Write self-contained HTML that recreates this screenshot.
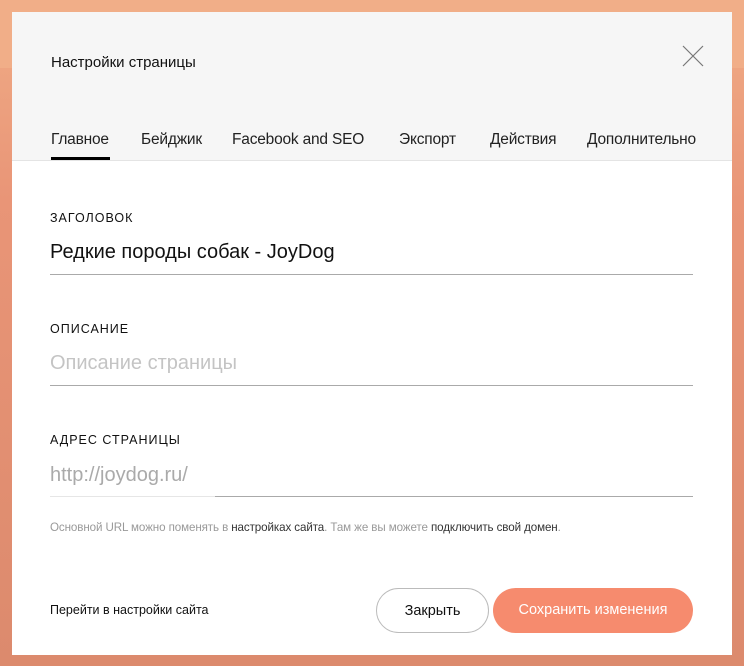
<!DOCTYPE html>
<html><head><meta charset="utf-8"><style>
*{margin:0;padding:0;box-sizing:border-box}
body{width:744px;height:666px;overflow:hidden;background:linear-gradient(180deg,#f0ac86 0%,#e99577 30%,#dc8a6d 100%);font-family:"Liberation Sans","Noto Sans CJK SC",sans-serif;position:relative}
.band{position:absolute;left:0;top:0;width:744px;height:68px;background:#f1ae88}
.modal{position:absolute;left:12px;top:12px;width:720px;height:643px;background:#fff}
.head{position:absolute;left:0;top:0;width:720px;height:149px;background:#f6f6f6;border-bottom:1px solid #e4e4e4}
.t{position:absolute;color:#111}
.title{left:39px;top:42px;font-size:15px}
.x{position:absolute;left:670px;top:33px}
.tab{position:absolute;top:119px;font-size:15.5px;color:#222;letter-spacing:-0.2px}
.ul{position:absolute;left:39px;top:145px;width:59px;height:3px;background:#000}
.lab{position:absolute;left:38px;font-size:12.5px;letter-spacing:1px;color:#111}
.val{position:absolute;left:38px;font-size:20px;color:#111}
.line{position:absolute;left:38px;width:643px;height:1px;background:#aaa}
.note{position:absolute;left:38px;top:509px;font-size:11.6px;color:#999;letter-spacing:-0.1px}
.note b{font-weight:normal;color:#333}
.btn{position:absolute;top:576px;height:45px;border-radius:23px;font-size:14.5px;text-align:center;line-height:45px}
</style></head><body>
<div class="band"></div>
<div class="modal">
<div class="head">
<div class="t title">Настройки страницы</div>
<svg class="x" width="22" height="22" viewBox="0 0 22 22"><path d="M1 1L21 21M21 1L1 21" stroke="#777" stroke-width="1.2"/></svg>
<div class="tab" style="left:39px">Главное</div>
<div class="tab" style="left:129px">Бейджик</div>
<div class="tab" style="left:220px">Facebook and SEO</div>
<div class="tab" style="left:387px">Экспорт</div>
<div class="tab" style="left:478px">Действия</div>
<div class="tab" style="left:575px">Дополнительно</div>
<div class="ul"></div>
</div>
<div class="lab" style="top:199px">ЗАГОЛОВОК</div>
<div class="val" style="top:229px">Редкие породы собак - JoyDog</div>
<div class="line" style="top:262px"></div>
<div class="lab" style="top:310px">ОПИСАНИЕ</div>
<div class="val" style="top:340px;color:#c4c4c4">Описание страницы</div>
<div class="line" style="top:373px"></div>
<div class="lab" style="top:421px">АДРЕС СТРАНИЦЫ</div>
<div class="val" style="top:452px;color:#aaa">http://joydog.ru/</div>
<div class="line" style="top:484px;left:38px;width:165px;background:#e6e6e6"></div>
<div class="line" style="top:484px;left:203px;width:478px"></div>
<div class="note">Основной URL можно поменять в <b>настройках сайта</b>. Там же вы можете <b>подключить свой домен</b>.</div>
<div class="t" style="left:38px;top:591px;font-size:12.5px">Перейти в настройки сайта</div>
<div class="btn" style="left:364px;width:113px;border:1px solid #bbb;color:#111">Закрыть</div>
<div class="btn" style="left:481px;width:200px;background:#f68b6e;color:#fff">Сохранить изменения</div>
</div>
</body></html>
